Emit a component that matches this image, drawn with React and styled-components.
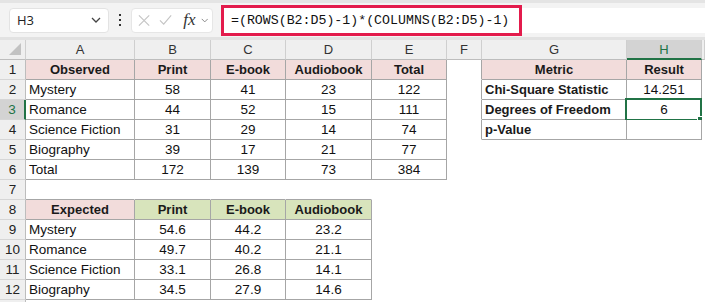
import React from 'react';
import styled, { createGlobalStyle, css } from 'styled-components';

const GlobalStyle = createGlobalStyle`
  html, body {
    margin: 0;
    padding: 0;
    background: #ffffff;
    overflow: hidden;
  }
  body {
    width: 705px;
    height: 302px;
    font-family: "Liberation Sans", Arial, sans-serif;
  }
`;

const TABLE_LINE = '#a6a6a6';
const GREEN = '#217346';

const Page = styled.div`
  width: 705px;
  height: 302px;
  overflow: hidden;
  background: #fff;
`;

const FormulaBar = styled.div`
  height: 34px;
  border-top: 3px solid #e4e4e4;
  border-bottom: 3px solid #e2e2e2;
  background: #f3f3f3;
  display: flex;
  align-items: center;
  padding-left: 9px;
`;

const NameBox = styled.div`
  width: 100px;
  height: 25px;
  box-sizing: border-box;
  background: #fff;
  border: 1px solid #e3e3e3;
  border-radius: 4px;
  display: flex;
  align-items: center;
  justify-content: space-between;
  padding: 0 7px;
  font-family: "Open Sans", "Liberation Sans", sans-serif;
  font-size: 13px;
  color: #222;
`;

const Dots = styled.div`
  width: 22px;
  display: flex;
  justify-content: center;
`;

const FxBox = styled.div`
  width: 82px;
  height: 25px;
  box-sizing: border-box;
  background: #fff;
  border: 1px solid #e6e6e6;
  border-radius: 4px;
  display: flex;
  align-items: center;
  padding: 0 4px 0 6px;
  gap: 9px;
`;

const Fx = styled.span`
  font-family: "Liberation Serif", "Times New Roman", serif;
  font-style: italic;
  font-size: 17px;
  color: #333;
  margin-left: 2px;
  margin-right: -4px;
`;

const InputBox = styled.div`
  flex: 1;
  margin-left: 8px;
  height: 25px;
  background: #fff;
  display: flex;
  align-items: center;
`;

const Highlight = styled.div`
  height: 31px;
  width: 301px;
  box-sizing: border-box;
  border: 3px solid #e31b4c;
  display: flex;
  align-items: center;
  padding-left: 7px;
  font-family: "Liberation Mono", "DejaVu Sans Mono", monospace;
  font-size: 13.25px;
  color: #111;
  white-space: nowrap;
`;

const Sheet = styled.div`
  display: grid;
  grid-template-columns: 26px 109px 76px 75px 86px 75px 35px 145px 75px 1fr;
  grid-auto-rows: 20px;
`;

const ColHead = styled.div`
  box-sizing: border-box;
  background: ${(p) => (p.$active ? '#d3d3d3' : '#efefef')};
  color: ${(p) => (p.$active ? GREEN : '#333')};
  border-right: 1px solid #cfcfcf;
  border-bottom: ${(p) => (p.$active ? `2px solid ${GREEN}` : '1px solid #bdbdbd')};
  display: flex;
  align-items: center;
  justify-content: center;
  font-size: 13px;
  position: relative;
`;

const Corner = styled.div`
  position: absolute;
  right: 4px;
  bottom: 4px;
  width: 0;
  height: 0;
  border-left: 12px solid transparent;
  border-bottom: 12px solid #c2c2c2;
`;

const RowHead = styled.div`
  box-sizing: border-box;
  background: ${(p) => (p.$active ? '#d3d3d3' : '#efefef')};
  color: ${(p) => (p.$active ? GREEN : '#222')};
  border-right: ${(p) => (p.$active ? `2px solid ${GREEN}` : '1px solid #bdbdbd')};
  border-bottom: 1px solid #d6d6d6;
  display: flex;
  align-items: center;
  justify-content: center;
  font-size: 13.5px;
`;

const fills = {
  pink: '#f2dcdb',
  green: '#d8e4bc',
};

const Cell = styled.div`
  box-sizing: border-box;
  position: relative;
  background: ${(p) => fills[p.$fill] || '#fff'};
  border-right: 1px solid ${(p) => (p.$r ? TABLE_LINE : 'transparent')};
  border-bottom: 1px solid ${(p) => (p.$b ? TABLE_LINE : 'transparent')};
  display: flex;
  align-items: center;
  justify-content: ${(p) => (p.$left ? 'flex-start' : 'center')};
  padding: ${(p) => (p.$left ? '0 0 0 3px' : '0')};
  font-size: 13.5px;
  color: #111;
  white-space: nowrap;
  ${(p) =>
    p.$bold &&
    css`
      font-weight: bold;
      font-size: 13px;
      color: #1a1a1a;
    `}
`;

const Selection = styled.div`
  position: absolute;
  left: -2px;
  top: -2px;
  right: -1px;
  bottom: -2px;
  border: 2px solid ${GREEN};
  pointer-events: none;
`;

const Handle = styled.div`
  position: absolute;
  right: -4px;
  bottom: -4px;
  width: 5px;
  height: 5px;
  background: ${GREEN};
  border: 1px solid #fff;
`;

const cols = ['A', 'B', 'C', 'D', 'E', 'F', 'G', 'H'];

// each row: 8 cells for A..H; cell = [text, options]
const T = { r: true, b: true };
const blank = ['', {}];
const data = [
  [
    ['Observed', { ...T, fill: 'pink', bold: true }],
    ['Print', { ...T, fill: 'pink', bold: true }],
    ['E-book', { ...T, fill: 'pink', bold: true }],
    ['Audiobook', { ...T, fill: 'pink', bold: true }],
    ['Total', { ...T, fill: 'pink', bold: true }],
    ['', { r: true }],
    ['Metric', { ...T, fill: 'pink', bold: true }],
    ['Result', { ...T, fill: 'pink', bold: true }],
  ],
  [
    ['Mystery', { ...T, left: true }], ['58', T], ['41', T], ['23', T], ['122', T], ['', { r: true }],
    ['Chi-Square Statistic', { ...T, left: true, bold: true }], ['14.251', T],
  ],
  [
    ['Romance', { ...T, left: true }], ['44', T], ['52', T], ['15', T], ['111', T], ['', { r: true }],
    ['Degrees of Freedom', { ...T, left: true, bold: true }], ['6', { ...T, selected: true }],
  ],
  [
    ['Science Fiction', { ...T, left: true }], ['31', T], ['29', T], ['14', T], ['74', T], ['', { r: true }],
    ['p-Value', { ...T, left: true, bold: true }], ['', T],
  ],
  [
    ['Biography', { ...T, left: true }], ['39', T], ['17', T], ['21', T], ['77', T], blank, blank, blank,
  ],
  [
    ['Total', { ...T, left: true }], ['172', T], ['139', T], ['73', T], ['384', T], blank, blank, blank,
  ],
  [
    ['', { b: true }], ['', { b: true }], ['', { b: true }], ['', { b: true }], blank, blank, blank, blank,
  ],
  [
    ['Expected', { ...T, fill: 'pink', bold: true }],
    ['Print', { ...T, fill: 'green', bold: true }],
    ['E-book', { ...T, fill: 'green', bold: true }],
    ['Audiobook', { ...T, fill: 'green', bold: true }],
    blank, blank, blank, blank,
  ],
  ...[
    ['Mystery', '54.6', '44.2', '23.2'],
    ['Romance', '49.7', '40.2', '21.1'],
    ['Science Fiction', '33.1', '26.8', '14.1'],
    ['Biography', '34.5', '27.9', '14.6'],
  ].map(([name, a, b, c]) => [
    [name, { ...T, left: true }], [a, T], [b, T], [c, T],
    blank, blank, blank, blank,
  ]),
];

const Chevron = ({ size = 10, color = '#444' }) => (
  <svg width={size} height={size * 0.6} viewBox="0 0 10 6">
    <path d="M1 1 L5 5 L9 1" fill="none" stroke={color} strokeWidth="1.3" />
  </svg>
);

const App = () => {
  return (
    <Page>
      <GlobalStyle />
      <FormulaBar>
        <NameBox>
          <span>H3</span>
          <Chevron />
        </NameBox>
        <Dots>
          <svg width="4" height="12" viewBox="0 0 4 12">
            <rect x="1" y="0" width="2" height="2" fill="#333" />
            <rect x="1" y="5" width="2" height="2" fill="#333" />
            <rect x="1" y="10" width="2" height="2" fill="#333" />
          </svg>
        </Dots>
        <FxBox>
          <svg width="13" height="13" viewBox="0 0 13 13">
            <path d="M1 1 L12 12 M12 1 L1 12" stroke="#c4c4c4" strokeWidth="1.2" fill="none" />
          </svg>
          <svg width="14" height="12" viewBox="0 0 14 12">
            <path d="M1 6.5 L5 10.5 L13 1" stroke="#c4c4c4" strokeWidth="1.2" fill="none" />
          </svg>
          <Fx>fx</Fx>
          <Chevron size={8} color="#888" />
        </FxBox>
        <InputBox>
          <Highlight>=(ROWS(B2:D5)-1)*(COLUMNS(B2:D5)-1)</Highlight>
        </InputBox>
      </FormulaBar>
      <Sheet>
        <ColHead>
          <Corner />
        </ColHead>
        {cols.map((c) => (
          <ColHead key={c} $active={c === 'H'}>
            {c}
          </ColHead>
        ))}
        <ColHead />
        {data.map((row, ri) => (
          <React.Fragment key={ri}>
            <RowHead $active={ri === 2}>{ri + 1}</RowHead>
            {row.map(([text, o], ci) => (
              <Cell
                key={ci}
                $r={o.r}
                $b={o.b}
                $fill={o.fill}
                $bold={o.bold}
                $left={o.left}
              >
                {text}
                {o.selected && (
                  <Selection>
                    <Handle />
                  </Selection>
                )}
              </Cell>
            ))}
            <Cell />
          </React.Fragment>
        ))}
        <RowHead />
      </Sheet>
    </Page>
  );
};

export default App;
